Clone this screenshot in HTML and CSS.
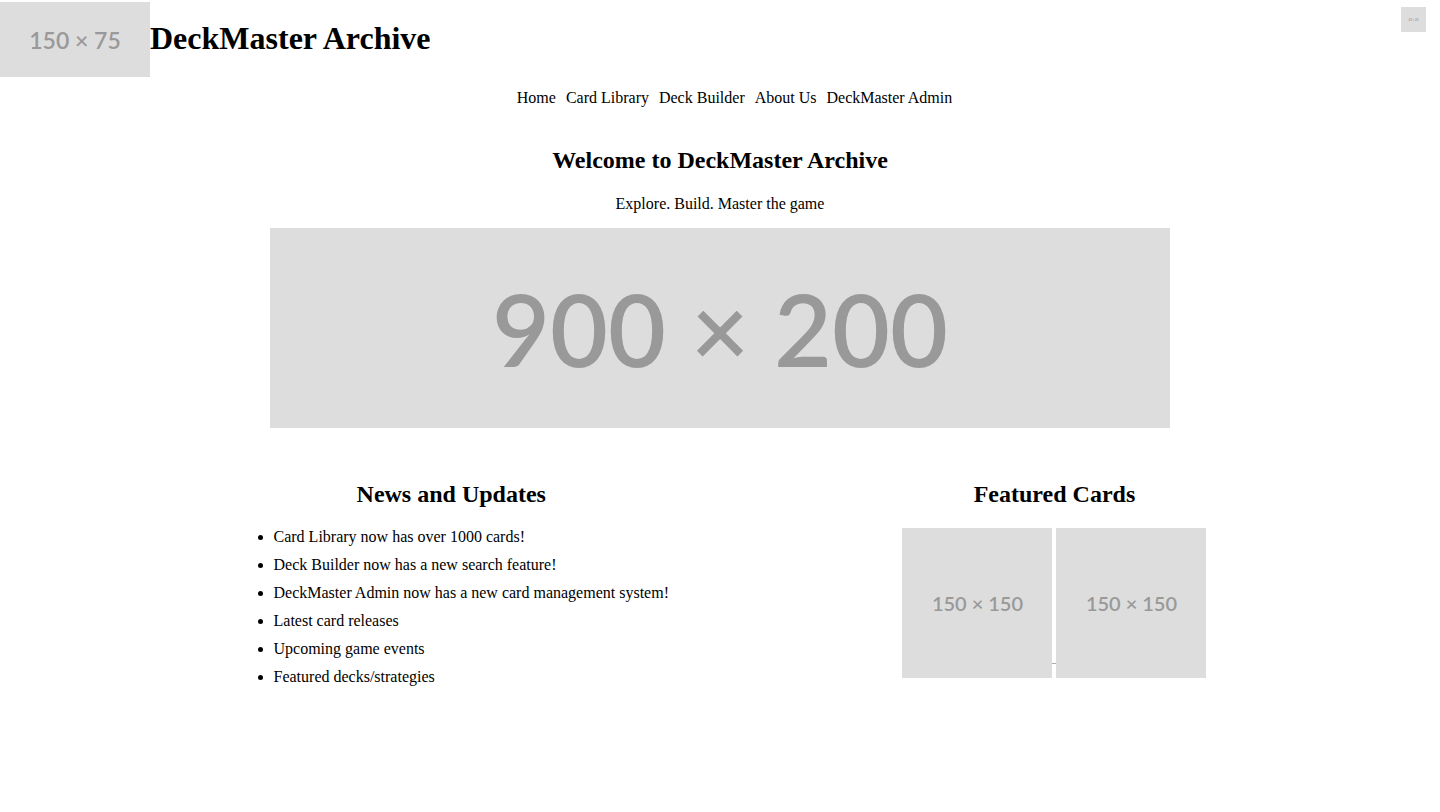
FILE: index.html
```html
<!DOCTYPE html>
<html lang="en">
<head>
<meta charset="utf-8">
<title>DeckMaster Archive</title>
<link rel="stylesheet" href="styles.css">
</head>
<body>
<header class="site-header">
  <div class="ph ph-logo">150 × 75</div>
  <h1 class="site-title">DeckMaster Archive</h1>
  <div class="ph ph-user">25 × 25</div>
</header>
<nav class="main-nav">
  <a href="#">Home</a>
  <a href="#">Card Library</a>
  <a href="#">Deck Builder</a>
  <a href="#">About Us</a>
  <a href="#">DeckMaster Admin</a>
</nav>
<main>
  <section class="hero">
    <h2 class="hero-title">Welcome to DeckMaster Archive</h2>
    <p class="hero-sub">Explore. Build. Master the game</p>
    <div class="ph ph-banner">900 × 200</div>
  </section>
  <div class="columns">
    <section class="news">
      <h2 class="col-title">News and Updates</h2>
      <ul class="news-list">
        <li>Card Library now has over 1000 cards!</li>
        <li>Deck Builder now has a new search feature!</li>
        <li>DeckMaster Admin now has a new card management system!</li>
        <li>Latest card releases</li>
        <li>Upcoming game events</li>
        <li>Featured decks/strategies</li>
      </ul>
    </section>
    <section class="featured">
      <h2 class="col-title">Featured Cards</h2>
      <div class="card-row">
        <div class="ph ph-card">150 × 150</div>
        <span class="card-sep"></span>
        <div class="ph ph-card">150 × 150</div>
      </div>
    </section>
  </div>
</main>
</body>
</html>
```
FILE: styles.css
```css
html, body {
  margin: 0;
  padding: 0;
  background: #fff;
}
body {
  font-family: "Liberation Serif", "Times New Roman", serif;
  font-size: 16px;
  color: #000;
}
.ph {
  background: #dddddd;
  color: #999999;
  font-family: Lato, "Open Sans", sans-serif;
  font-weight: 600;
  display: flex;
  align-items: center;
  justify-content: center;
  white-space: nowrap;
  flex-shrink: 0;
}
.site-header {
  display: flex;
  align-items: center;
  height: 77px;
}
.ph-logo {
  width: 150px;
  height: 75px;
  margin-top: 2px;
  font-size: 23px;
}
.site-title {
  margin: 0;
  font-size: 32px;
  line-height: 37px;
  font-weight: bold;
}
.ph-user {
  width: 25px;
  height: 25px;
  font-size: 3px;
  margin-left: auto;
  margin-right: 14px;
  align-self: flex-start;
  margin-top: 7px;
}
.main-nav {
  display: flex;
  justify-content: center;
  gap: 10px;
  margin-top: 12px;
  padding-left: 29px;
  line-height: 18px;
}
.main-nav a {
  color: #000;
  text-decoration: none;
}
.hero {
  display: flex;
  flex-direction: column;
  align-items: center;
}
.hero-title {
  margin: 39px 0 0;
  font-size: 24px;
  line-height: 28px;
}
.hero-sub {
  margin: 21px 0 0;
  line-height: 18px;
}
.ph-banner {
  width: 900px;
  height: 200px;
  margin-top: 15px;
  font-size: 100px;
}
.columns {
  display: flex;
  justify-content: space-evenly;
  align-items: flex-start;
  margin-top: 52px;
}
.col-title {
  margin: 0;
  font-size: 24px;
  line-height: 28px;
  text-align: center;
}
.news-list {
  margin: 20px 0 0;
  padding-left: 40px;
}
.news-list li {
  line-height: 18px;
  margin-bottom: 10px;
}
.card-row {
  display: flex;
  align-items: flex-start;
  margin-top: 20px;
}
.ph-card {
  width: 150px;
  height: 150px;
  font-size: 20px;
}
.card-sep {
  width: 4px;
  height: 1px;
  background: #aaa;
  margin-top: 135px;
}
```
